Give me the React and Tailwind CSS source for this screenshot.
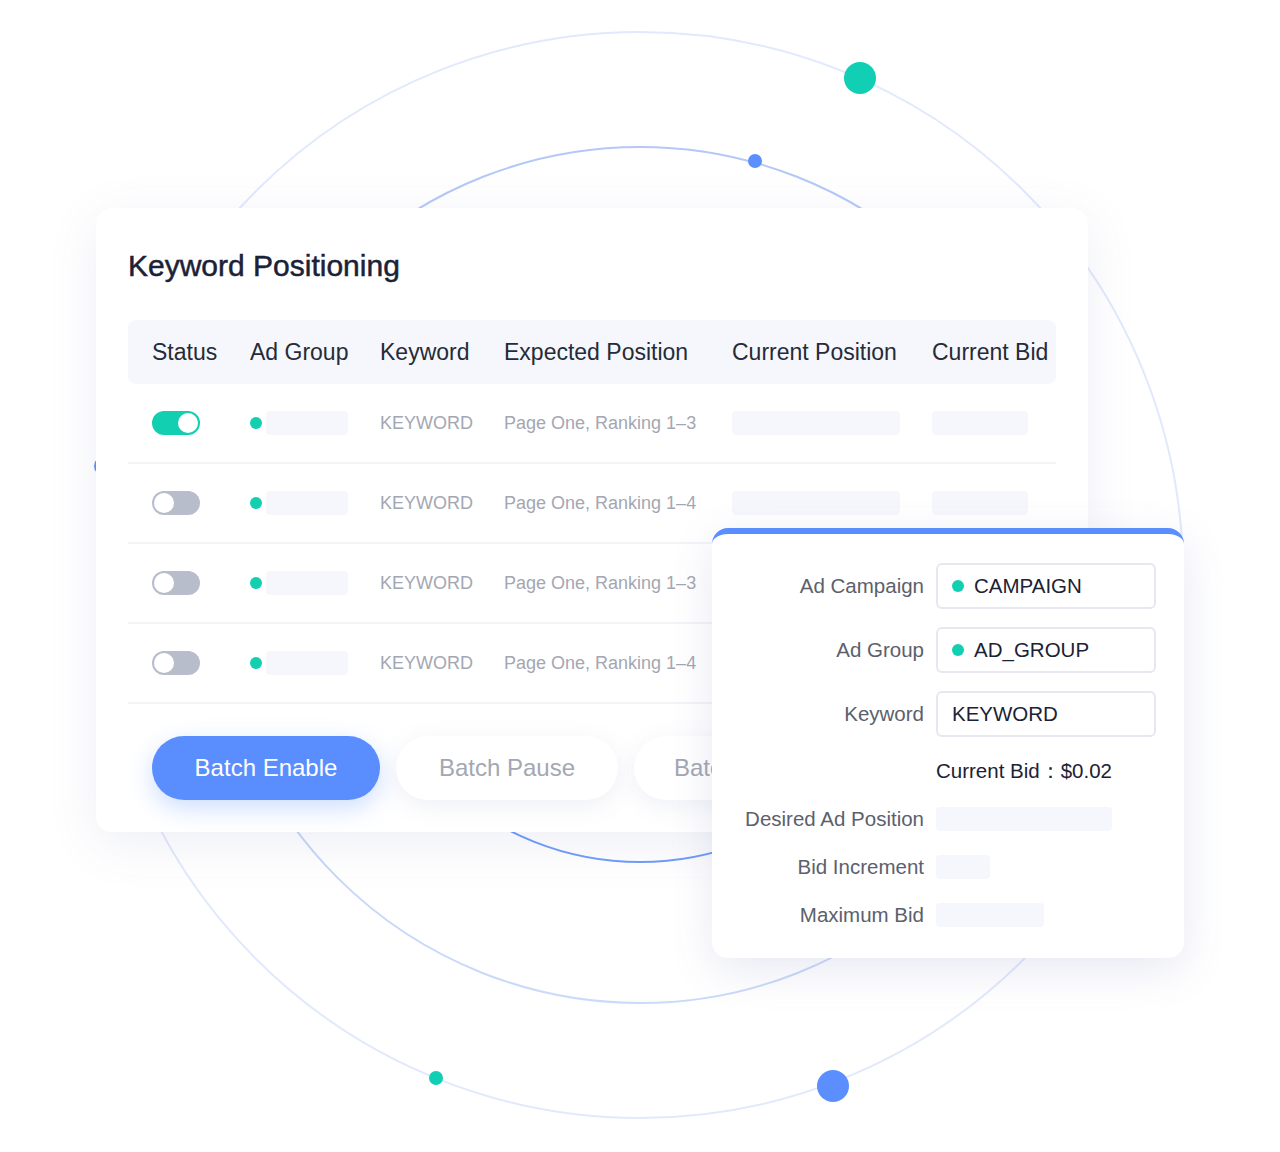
import React from 'react';

const rows = [
    { on: true, pos: 'Page One, Ranking 1–3' },
    { on: false, pos: 'Page One, Ranking 1–4' },
    { on: false, pos: 'Page One, Ranking 1–3' },
    { on: false, pos: 'Page One, Ranking 1–4' },
];

function Toggle({ on }) {
    return (
        <div className={`w-[48px] h-[24px] rounded-full flex items-center px-[2px] ${on ? 'bg-[#12cfb2] justify-end' : 'bg-[#b8bdcc] justify-start'}`}>
            <div className="w-[20px] h-[20px] rounded-full bg-white" />
        </div>
    );
}

function Orbits() {
    return (
        <svg className="absolute left-0 top-0" width="1280" height="1152" viewBox="0 0 1280 1152" fill="none">
            <defs>
                <linearGradient id="g2" x1="0" y1="0" x2="0" y2="1">
                    <stop offset="0" stopColor="#b3c8f7" />
                    <stop offset="1" stopColor="#cbd9fb" />
                </linearGradient>
            </defs>
            <circle cx="640" cy="575" r="543" stroke="#e1e9fc" strokeWidth="2" />
            <circle cx="640" cy="575" r="428" stroke="url(#g2)" strokeWidth="2" />
            <circle cx="640" cy="575" r="287" stroke="#6f9cfb" strokeWidth="2" />
            <circle cx="860" cy="78" r="16" fill="#10cfb4" />
            <circle cx="755" cy="161" r="7" fill="#5b8fff" />
            <circle cx="436" cy="1078" r="7" fill="#10cfb4" />
            <circle cx="833" cy="1086" r="16" fill="#5b8fff" />
            <circle cx="104" cy="466" r="10" fill="#5b8fff" />
        </svg>
    );
}

export default function App() {
    return (
        <div className="relative w-[1280px] h-[1152px] bg-white overflow-hidden" style={{ fontFamily: '"Liberation Sans", Arial, sans-serif' }}>
            <Orbits />

            <div className="relative pt-[208px] pl-[96px]">
                <div className="w-[992px] h-[624px] bg-white rounded-[16px] shadow-[0_12px_50px_rgba(90,100,170,0.10)] px-[32px] pt-[40px]">
                    <h2 className="text-[30px] leading-[36px] text-[#1b2236] mb-[36px] [-webkit-text-stroke:0.5px_#1b2236]">Keyword Positioning</h2>

                    <div className="grid grid-cols-[98px_130px_124px_228px_200px_1fr] items-center h-[64px] pl-[24px] bg-[#f5f7fc] rounded-[8px] text-[23px] text-[#262b38]">
                        <span>Status</span>
                        <span>Ad Group</span>
                        <span>Keyword</span>
                        <span>Expected Position</span>
                        <span>Current Position</span>
                        <span>Current Bid</span>
                    </div>

                    {rows.map((r, i) => (
                        <div key={i} className="grid grid-cols-[98px_130px_124px_228px_200px_1fr] items-center h-[80px] pl-[24px] border-b-[2px] border-[#f3f4f8] text-[18px] text-[#a3a7b3]">
                            <Toggle on={r.on} />
                            <div className="flex items-center">
                                <span className="w-[12px] h-[12px] rounded-full bg-[#12cfb2]" />
                                <span className="ml-[4px] w-[82px] h-[24px] rounded-[4px] bg-[#f5f7fc]" />
                            </div>
                            <span>KEYWORD</span>
                            <span>{r.pos}</span>
                            <span className="w-[168px] h-[24px] rounded-[4px] bg-[#f5f7fc]" />
                            <span className="w-[96px] h-[24px] rounded-[4px] bg-[#f5f7fc]" />
                        </div>
                    ))}

                    <div className="flex gap-[16px] mt-[32px] pl-[24px]">
                        <button className="w-[228px] h-[64px] rounded-full bg-[#5a8eff] text-white text-[24px] shadow-[0_8px_24px_rgba(90,142,255,0.30)]">Batch Enable</button>
                        <button className="w-[222px] h-[64px] rounded-full bg-white text-[#a3a7b3] text-[24px] shadow-[0_6px_24px_rgba(100,110,170,0.10)]">Batch Pause</button>
                        <button className="w-[222px] h-[64px] rounded-full bg-white text-[#a3a7b3] text-[24px] shadow-[0_6px_24px_rgba(100,110,170,0.10)] text-left pl-[40px]">Batch Delete</button>
                    </div>
                </div>
            </div>

            <div className="absolute left-[712px] top-[528px] w-[472px] h-[430px] bg-white rounded-[16px] border-t-[6px] border-[#5a8eff] shadow-[0_12px_44px_rgba(90,100,170,0.14)] pt-[29px] text-[20.5px]">
                {[
                    { label: 'Ad Campaign', value: 'CAMPAIGN', dot: true },
                    { label: 'Ad Group', value: 'AD_GROUP', dot: true },
                    { label: 'Keyword', value: 'KEYWORD', dot: false },
                ].map((f) => (
                    <div key={f.label} className="flex items-center mb-[18px]">
                        <span className="w-[224px] pr-[12px] text-right text-[#5c606c]">{f.label}</span>
                        <div className="w-[220px] h-[46px] rounded-[6px] border-[2px] border-[#e5e8ef] flex items-center pl-[14px] text-[#1b2236]">
                            {f.dot && <span className="w-[12px] h-[12px] rounded-full bg-[#12cfb2] mr-[10px]" />}
                            {f.value}
                        </div>
                    </div>
                ))}

                <div className="flex items-center h-[24px] mt-[22px]">
                    <span className="w-[224px]" />
                    <span className="text-[#1b2236]">Current Bid：$0.02</span>
                </div>

                {[
                    { label: 'Desired Ad Position', w: 'w-[176px]' },
                    { label: 'Bid Increment', w: 'w-[54px]' },
                    { label: 'Maximum Bid', w: 'w-[108px]' },
                ].map((f) => (
                    <div key={f.label} className="flex items-center h-[24px] mt-[24px]">
                        <span className="w-[224px] pr-[12px] text-right text-[#5c606c]">{f.label}</span>
                        <span className={`${f.w} h-[24px] rounded-[4px] bg-[#f5f7fc]`} />
                    </div>
                ))}
            </div>
        </div>
    );
}
